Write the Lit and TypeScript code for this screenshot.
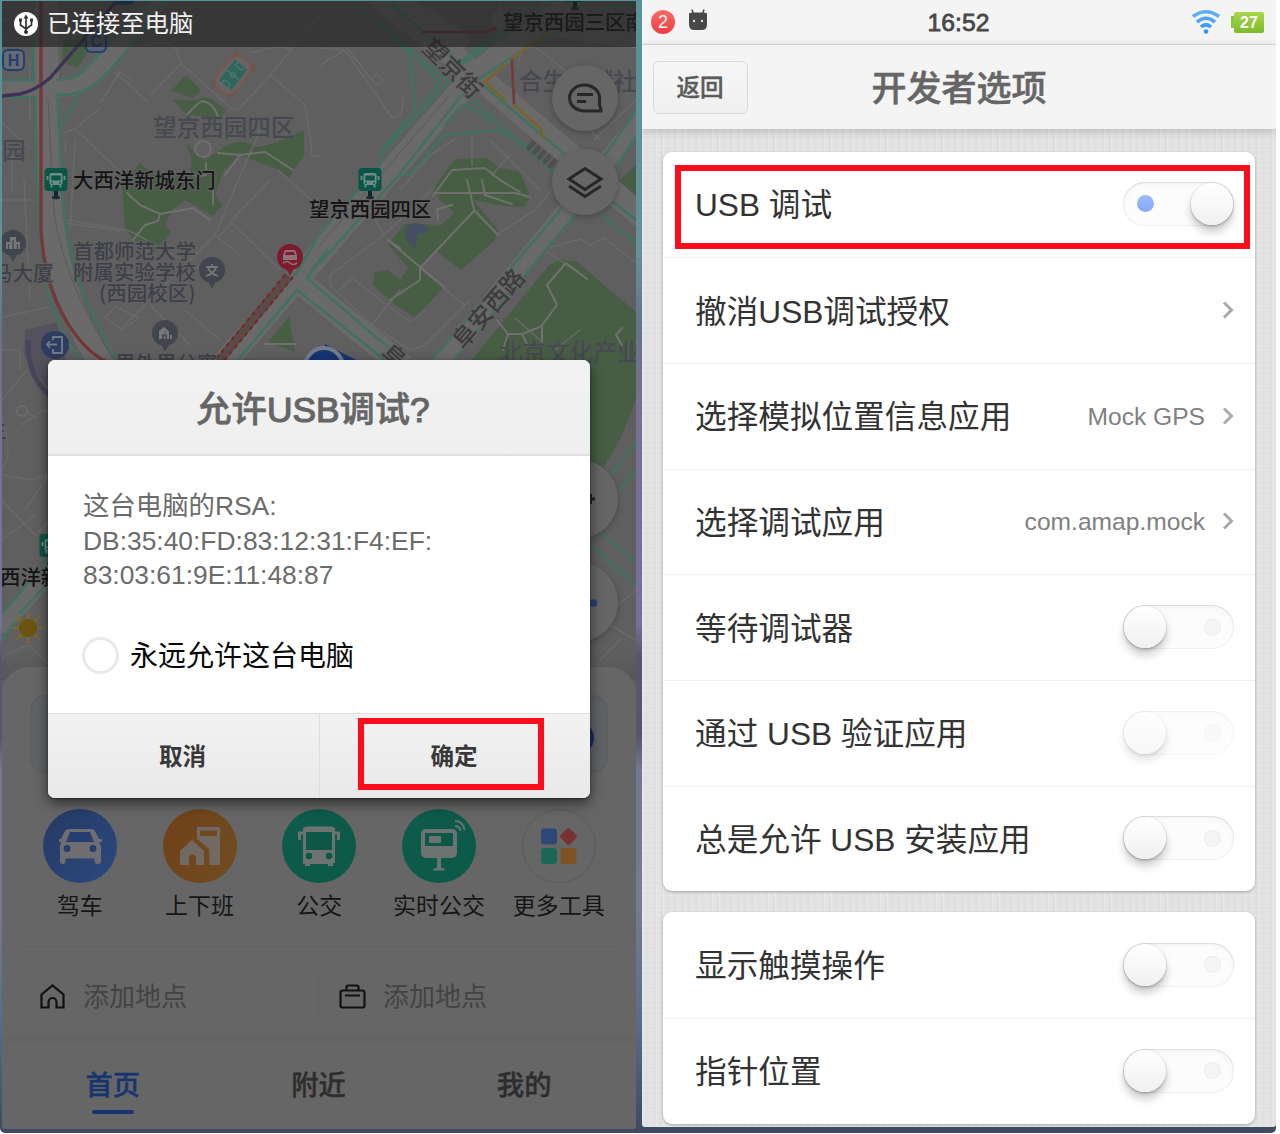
import { LitElement, html, svg, css } from "lit";
import { customElement, property } from "lit/decorators.js";
import { classMap } from "lit/directives/class-map.js";

const ROAD = "#6a6a6a";
const paths = (color: string, width: number, list: string[]) =>
  svg`<g fill="none" stroke=${color} stroke-width=${width} stroke-linejoin="round" stroke-linecap="round">${list.map((d) => svg`<path d=${d}/>`)}</g>`;

/** City map shown behind the dialog. */
@customElement("city-map")
export class CityMap extends LitElement {
  static styles = css`
    :host { display: block; }
    svg { display: block; width: 100%; height: 100%; font-family: "Noto Sans CJK SC", sans-serif; }
    .poi { fill: #3d4048; font-size: 20.5px; font-weight: 500; stroke: #626262; stroke-width: 2px; paint-order: stroke; }
    .area { fill: #474951; font-size: 23.6px; font-weight: 500; }
    .stop { fill: #141414; font-size: 20.4px; font-weight: 500; stroke: #626262; stroke-width: 2px; paint-order: stroke; }
    .street { fill: #3c3c3c; font-size: 24px; font-weight: 500; stroke: #666; stroke-width: 2px; paint-order: stroke; text-anchor: middle; }
    .letter { fill: #21406f; font-size: 16px; font-weight: 700; font-family: "Liberation Sans", sans-serif; text-anchor: middle; }
  `;

  private stop(x: number, y: number) {
    return svg`<g transform="translate(${x} ${y})">
      <path d="M0 8v9" stroke="#0d2a2b" stroke-width="4"/><ellipse cx="0" cy="16.500" rx="4" ry="1.800" fill="#1c2b33"/>
      <rect x="-11.500" y="-13" width="23" height="23" rx="3.500" fill="#0b5547"/>
      <rect x="-6.500" y="-8" width="13" height="12" rx="2" fill="#6f8d86"/>
      <rect x="-4.700" y="-5.500" width="9.400" height="5" fill="#0b5547"/>
      <path d="M-8.500-5v4M8.500-5v4M-4.500 4v2.500M4.500 4v2.500" stroke="#6f8d86" stroke-width="1.800"/>
      <circle cx="-4" cy="2" r=".9" fill="#0b5547"/><circle cx="4" cy="2" r=".9" fill="#0b5547"/></g>`;
  }

  private pin(x: number, y: number, color: string, icon: unknown) {
    return svg`<g transform="translate(${x} ${y})">
      <path d="M-4 11L0 19L4 11z" fill=${color}/><circle r="13" fill=${color}/>${icon}</g>`;
  }

  render() {
    return html`<svg viewBox="2 1 634 690" preserveAspectRatio="xMidYMin slice">
      <defs>
        <linearGradient id="fade" x1="0" x2="0" y1="0" y2="1"><stop offset="0" stop-color="#000" stop-opacity="0"/><stop offset="1" stop-color="#000" stop-opacity=".09"/></linearGradient>
      </defs>
      <rect x="0" y="0" width="640" height="700" fill="#5f5f5f"/>
      <g fill="#475e45">
        <path d="M63 40L90 40L91 47L78 67Q70 67 62 60z"/>
        <path d="M171 91L186 75L201 90L193 98z"/>
        <path d="M173 100L197 100Q207 94 214 101L226 110L220 118L187 115z"/>
        <path d="M225 147Q240 137 256 147Q270 147 304 130V155L289 178L278 170L240 155L224 170L215 195L223 205L213 216L185 200L172 210L165 225L171 232L155 252L133 239L125 229L122 186L140 163L150 172L190 175L192 160L186 143L195 152L205 160z"/>
        <path d="M455 159L487 158L500 168L520 172L530 196L525 207L505 206L473 200L498 230L495 240L461 270L435 250L420 270L443 288L415 318L390 301L373 285L375 272L388 270L400 280L408 268L388 244L405 224L425 224L440 226L454 213L440 200L433 189z"/>
        <path d="M268 342L289 317L295 352z"/>
        <path d="M549 265L562 260L577 262L636 312V400L620 440L590 490L560 400L470 362z"/>
        <path d="M620 180L636 165V210L615 200z"/>
        <path d="M395 1H408L401 9z"/>
      </g>
      <path d="M25 330L58 322L60 345L68 362L82 368L60 400L45 385L24 355z" fill="#55525f"/>
      <path d="M28 340Q27 380 54 398" fill="none" stroke="#48455b" stroke-width="5"/>
      <path d="M405 232Q407 222 418 223L428 228L428 232L417 235L416 248L414 249L407 240z" fill="#454e63"/>
      ${paths("#696969", 1.5, [
        "M2 40H34M115 72L148 102M132 80L120 72L101 102M145 45Q175 38 178 55L182 64L232 109L239 109L270 75L320 16",
        "M182 62L151 95M250 53Q285 43 290 50M270 75L305 105Q311 140 312 156H320M63 133L75 129L129 180M75 129L100 108M65 142L66 152",
        "M2 123L30 148M12 148V190M30 60V120M2 200H36M75 140L70 230M68 220L130 231L220 280M278 170L320 208",
        "M2 317L50 307M24 180L30 300M260 130L215 235L180 270L120 330M220 235L232 223L280 270M215 235L240 255M230 222L270 180",
        "M105 317L116 307L139 318L122 330zM62 180L66 223L120 231M150 305L190 345M185 310L220 340M2 350H20V370",
        "M320 48L345 50L391 116Q403 122 403 98M345 50L320 65M347 48L372 80M383 80L376 73L372 80L378 85z",
        "M472 135V165M455 139L430 155L400 190M490 140L540 190M510 155L492 175M360 195L384 235L435 187M384 235L330 275L330 285L372 325L410 350L425 345L470 300",
        "M340 290L352 278L400 315L410 322L425 310M370 327L400 290M443 288L465 305M498 234L535 210L560 180M520 256L580 239L590 245L604 238L636 263",
        "M545 250L586 278M515 318L540 340M594 140L636 100M580 120L600 140M518 68Q520 40 540 50L600 100",
        "M22 425L43 410L65 420M2 400L27 370M2 422Q14 455 2 470M24 412L37 417M2 500L35 535L60 510M2 475L30 480L48 475M25 510L48 475M2 540L35 515",
        "M2 657L28 645L50 665M555 350L580 330M577 640L636 590M610 625L636 640M600 660L620 640M500 40V1M330 1L300 40M2 20H34",
      ])}
      <circle cx="22" cy="411" r="5" fill="#5f5f5f" stroke="#6a6a6a" stroke-width="2"/>
      ${paths("#70706e", 2, [
        "M187 115Q197 103 202 101Q214 103 218 117M206 163V175Q195 178 190 173M218 153L240 155L265 152L293 170M240 155L225 175M127 193L140 205L160 214L158 221L145 225L133 240M160 214L193 208L210 220M213 181V204",
        "M435 193H515L530 197M467 180L474 210L498 235M482 180L485 195L512 204M433 196L452 170L485 168L500 180L520 192M452 205L437 209L438 220M474 211L420 268V280L390 300M388 240L400 248M388 240L445 288",
        "M566 263L547 285L557 305L542 325V342M566 263L587 279M497 320L508 334H522L542 326M508 334L503 350M522 334L528 346M622 328L616 335L622 345M265 344H295",
      ])}
      <circle cx="203" cy="149" r="8" fill="#616161" stroke="#6f6f6f" stroke-width="2"/>
      <circle cx="206" cy="111" r="7" fill="#475e45"/>
      ${paths(ROAD, 24, [
        "M46 1L48 180Q52 290 105 370", "M352 -25L480 78L640 215", "M590 -20L470 80L225 362", "M302 284L420 380",
      ])}
      ${paths(ROAD, 18, ["M2 88H62Q84 88 100 68L158 1", "M640 120L443 360", "M640 40L500 20", "M2 625L50 572", "M400 1L460 40"])}
      ${paths("#5a5a5a", 1, ["M48 100L53 200Q58 270 108 350", "M449 96L320 245", "M470 40L483 41"])}
      ${paths("#417160", 2.6, [
        "M32 1L34 80H2M2 97H35L37 180Q38 250 50 297T92 370", "M57 80Q78 80 88 66L150 1M57 95Q82 96 100 80T165 1M57 95L62 180Q64 235 77 275T120 365M78 95L62 125",
        "M352 1L449 82L383 151L380 165L320 233L297 272L215 362", "M380 23L410 55L415 110L383 148", "M392 5L457 60L469 60L533 1", "M482 41L457 68L553 1", "M636 3L600 10L535 42L477 80L563 153",
        "M420 63L440 82L422 105M445 125L460 107Q465 103 470 107L490 122", "M320 263L397 177L460 97Q463 93 470 97L520 143L553 172",
        "M397 177L413 172L443 135L498 130L530 148L555 172", "M297 290L238 360M297 290L385 360M327 250L307 278L397 355",
        "M562 208L430 362M575 215L452 362M636 110L605 155M636 137L615 168M613 202L636 220M600 213L636 243",
        "M636 442L610 475M636 470L617 492M600 532L636 562M590 545L636 585M2 613L58 550M20 613L60 570M2 640L15 622",
      ])}
      ${paths("#743837", 3.4, ["M41 1L41 230Q44 280 63 315T107 362"])}
      ${paths("#773838", 2.6, ["M423 32L487 32L495 28", "M512 60L514 105"])}
      ${paths("#7b6328", 2.6, ["M505 64L485 82L505 100", "M514 105L540 128L544 138", "M512 58L550 32"])}
      ${paths("#3f3257", 3.4, ["M2 96L20 94Q35 91 50 78L115 3"])}
      <path d="M289 276L218 362" stroke="#594b4a" stroke-width="9" fill="none"/>
      <path d="M285 275L214 361M293 277L223 362" stroke="#7b251d" stroke-width="2" stroke-dasharray="4 4" fill="none"/>
      <path d="M529 144L554 165" stroke="#505050" stroke-width="11" stroke-dasharray="5 2" fill="none"/>
      <g transform="translate(233 75) rotate(38)"><rect x="-13" y="-21" width="26" height="42" fill="#6b5551"/><rect x="-12" y="-20" width="24" height="40" rx="11" fill="#656565" stroke="#7b574f" stroke-width="2"/><path d="M-8-13H8V13H-8z" fill="#2f6659"/><g fill="none" stroke="#5d7f77" stroke-width=".9"><path d="M-8 0H8M-4-13V-9H4V-13M-4 13V9H4V13"/><circle r="2.500"/></g></g>

      <text class="area" x="153" y="136">望京西园四区</text>
      <text class="area" x="2" y="159">园</text>
      <text class="area" x="519" y="90">合生麒麟社</text>
      <text class="area" x="499" y="361">北京文化产业</text>
      <text class="poi" x="73" y="259">首都师范大学</text>
      <text class="poi" x="73" y="280">附属实验学校</text>
      <text class="poi" x="99" y="301">(西园校区)</text>
      <text class="poi" x="-8" y="281">马大厦</text>
      <text class="poi" x="115" y="371">里外里公寓</text>
      <text class="poi" x="-14" y="438">生</text>
      <text class="street" transform="translate(452 69) rotate(45)" y="8">望京街</text>
      <text class="street" transform="translate(489 309) rotate(-49)" y="8">阜安西路</text>
      <text class="street" transform="translate(397 371) rotate(42)" y="0">阜安</text>

      ${this.stop(56, 181)}${this.stop(370, 181)}${this.stop(575, -8)}${this.stop(51, 547)}
      <text class="stop" x="73" y="188">大西洋新城东门</text>
      <text class="stop" x="309" y="217">望京西园四区</text>
      <text class="stop" x="503" y="30">望京西园三区南</text>
      <text class="stop" x="0" y="585">西洋新</text>

      <rect x="3" y="50" width="21" height="20" rx="5" fill="#676a70" stroke="#21406f" stroke-width="2"/><text class="letter" x="13.500" y="66">H</text>
      <rect x="86" y="32" width="20" height="20" rx="5" fill="#596272" stroke="#21406f" stroke-width="2"/><text class="letter" x="96" y="47">C</text>
      <rect x="114" y="-15" width="20" height="20" rx="5" fill="#21406f"/>

      ${this.pin(13, 243, "#41454e", svg`<path d="M-7 6V-1H-3V-6H3V-1H7V6z" fill="#777"/><path d="M-4.500 1v5M0-3v9M4.500 1v5" stroke="#41454e" stroke-width="1.300"/>`)}
      ${this.pin(212, 270, "#41454e", svg`<path d="M0-6V-4M-6-3H6M-4-2Q-1 4 6 6M4-2Q1 4-6 6" stroke="#777" stroke-width="1.800" fill="none"/>`)}
      ${this.pin(165, 333, "#41454e", svg`<path d="M-6 6V-2L-1-6L4-2V6zM5 2H7V6H5z" fill="#777"/><path d="M-2 6V2H1V6M0-1h1" stroke="#41454e" fill="none" stroke-width="1.500"/>`)}
      ${this.pin(290, 257, "#7c1c2c", svg`<path d="M-5-7H5L7-2V3H-7V-2z" fill="#8f7276"/><path d="M-4-5H4L5-2H-5z" fill="#7c1c2c"/><path d="M-7 6Q-3 3 0 6T7 6" stroke="#8f7276" fill="none" stroke-width="1.600"/>`)}
      <circle cx="55" cy="345" r="14" fill="#2c3d60"/><path d="M53 340V337H62V353H53V349M47 344.500H57M50 341L47 344.500L50 348" fill="none" stroke="#717a89" stroke-width="1.900"/>
      <path d="M325 344L358 361H325z" fill="#153675"/><circle cx="324" cy="367" r="19" fill="#153675" stroke="#777d88" stroke-width="4"/>

      <circle cx="28" cy="628" r="9" fill="#6c5310"/>
      <path d="M28 613.500V618M28 638V642.500M13.500 628H18M38 628H42.500M17.700 617.700L20.900 620.900M35.100 635.100L38.300 638.300M38.300 617.700L35.100 620.900M20.900 635.100L17.700 638.300" fill="none" stroke="#84691b" stroke-width="2.200" stroke-linecap="round"/>

      <g fill="#666" filter="drop-shadow(0 2px 3px rgba(0,0,0,.25))"><circle cx="585" cy="98" r="33"/><circle cx="585" cy="182" r="33"/><circle cx="578" cy="499" r="40"/><circle cx="578" cy="602" r="40"/></g>
      <path d="M601 109.500V111H585A15 13 0 1 1 599.500 97V105z" fill="none" stroke="#272727" stroke-width="3"/>
      <path d="M577 94.500H593M577 101.500H586" stroke="#272727" stroke-width="3"/>
      <path d="M585 168.500L601 179L585 189.500L569 179zM569 186L585 196.500L601 186" fill="none" stroke="#272727" stroke-width="3"/>
      <path d="M578 499H595M590.500 494V504" stroke="#222" stroke-width="3"/><path d="M580 603H597" stroke="#2e4375" stroke-width="7"/>
      <rect x="0" y="650" width="640" height="30" fill="url(#fade)"/>
    </svg>`;
  }
}

/** Round shortcut icons of the home sheet. */
const toolIcons: Record<string, unknown> = {
  car: svg`<path d="M22 22Q23 20 26 20H48Q51 20 52 22L56 30H59V33H56L58 37V52Q58 55 55 55Q51.500 55 51.500 52V49.500H22.500V52Q22.500 55 19.500 55Q17 55 17 52V37L18 33H16V30H18z" fill="#6e6e70"/><path d="M27 23H47L51 33H23z" fill="#263d6d"/><circle cx="24" cy="39.500" r="3.400" fill="#263d6d"/><circle cx="50" cy="39.500" r="3.400" fill="#263d6d"/>`,
  home: svg`<path d="M34 18H57V56H45.500V41L34 30.500z" fill="#716a64"/><path d="M37 21.500H54V27H37z" fill="#70481c"/><path d="M29 27.500L44.500 41V56" fill="none" stroke="#704a1e" stroke-width="3.500"/><path d="M17 42L29 31L41 42V56H33V49A3.500 3.500 0 0 0 26 49V56H17z" fill="#716a64"/>`,
  bus: svg`<path d="M21 20Q21 18 25 17.500H49Q53 18 53 20V54H51V57H46V55H28V57H23V55H21z" fill="#6c7371"/><path d="M24 23H50V41H24z" fill="#0c5746"/><circle cx="27" cy="47" r="3.300" fill="#0c5746"/><circle cx="47" cy="47" r="3.300" fill="#0c5746"/><path d="M17.500 31V24H22M56.500 31V24H52" fill="none" stroke="#6c7371" stroke-width="3"/>`,
  live: svg`<rect x="19" y="20" width="36" height="29" rx="5" fill="#6c7371"/><path d="M23 24H51V37H23z" fill="#0c5746"/><rect x="27" y="27" width="12" height="7" rx="1" fill="#6c7371"/><path d="M37 49V60" stroke="#6c7371" stroke-width="4"/><path d="M31 61.500Q31 58.500 37 58.500Q43 58.500 43 61.500z" fill="#6c7371"/><path d="M53 12Q61 12 62.500 21M53 17Q58 17 58.500 22" fill="none" stroke="#6c7371" stroke-width="2"/>`,
  more: svg`<rect x="19" y="19.500" width="16" height="16" rx="3" fill="#2d4779"/><rect x="19" y="39" width="16" height="16" rx="3" fill="#1d6656"/><rect x="38.500" y="39" width="16" height="16" rx="3" fill="#7d5323"/><rect x="40" y="21" width="13" height="13" rx="2" transform="rotate(45 46.500 27.500)" fill="#78312f"/>`,
};

const TOOLS = [
  ["car", "驾车"], ["home", "上下班"], ["bus", "公交"], ["live", "实时公交"], ["more", "更多工具"],
];

@customElement("map-phone")
export class MapPhone extends LitElement {
  static styles = css`
    :host { display: flex; flex-direction: column; position: relative; overflow: hidden; background: #5f5f5f; border-radius: 0 0 3px 3px;
      font-family: "Liberation Sans", "Noto Sans CJK SC", sans-serif; }
    .map { position: absolute; inset: 0 0 auto 0; height: 690px; }
    .status { position: relative; height: 46px; box-sizing: border-box; flex: none; display: flex; align-items: center; gap: 9px; padding: 0 0 1px 12px; color: #f2f2f2; font-size: 24.400px; line-height: 32px; background: rgba(30, 30, 30, .62); }
    .status svg { width: 24px; height: 24px; }
    .sheet { position: relative; margin-top: auto; flex: none; height: 462px; background: #666; border-radius: 27px 27px 0 0; display: flex; flex-direction: column; }
    .search { box-sizing: border-box; height: 78px; margin: 28px 28px 0; border: 2px solid #5d5f61; border-radius: 15px; background: #606366; display: flex; align-items: center; justify-content: flex-end; padding: 8px 12px 0 0; }
    .go { width: 34px; height: 34px; border-radius: 50%; background: #202d5c; }
    .tools { display: grid; grid-template-columns: repeat(5, 1fr); margin: 36px 17.500px 0 18px; }
    .tool { display: flex; flex-direction: column; align-items: center; color: #161616; font-size: 23px; line-height: 30px; gap: 8px; white-space: nowrap; }
    .disc { width: 74px; height: 74px; border-radius: 50%; }
    .disc svg { display: block; width: 74px; height: 74px; }
    .car { background: linear-gradient(135deg, #263964, #2b4a7e); }
    .home { background: linear-gradient(110deg, #704119, #704c21); }
    .bus, .live { background: linear-gradient(135deg, #0f5b4c, #0c5947); }
    .more { box-sizing: border-box; border: 1.500px solid #5b5b5b; }
    .more svg { margin: -1px; }
    .places { display: grid; grid-template-columns: 1fr 1fr; margin: 25px 20px 0 18px; border-top: 1px solid #606060; height: 95px; align-items: center; padding-top: 4px; box-sizing: border-box; }
    .place { display: flex; align-items: center; height: 36px; gap: 17px; padding-left: 18px; color: #434343; font-size: 26px; }
    .place span { margin-top: -4px; }
    .place + .place { border-left: 1px solid #606060; padding-left: 19px; }
    .place svg { width: 28px; height: 28px; }
    .tabs { flex: 1; display: grid; grid-template-columns: repeat(3, 1fr); padding: 0 9px 0 8px; background: #666; box-shadow: 0 -2px 4px rgba(0, 0, 0, .05); }
    .tab { display: flex; flex-direction: column; align-items: center; padding-top: 25px; gap: 4px; color: #2d2d2d; font-size: 27.300px; font-weight: 500; line-height: 40px; -webkit-text-stroke: .4px currentColor; }
    .tab.active { color: #17356f; }
    .tab.active::after { content: ""; width: 42px; height: 4px; border-radius: 2px; background: #17356f; }
    .dialog { position: absolute; left: 46px; top: 359px; width: 542px; height: 438px; border-radius: 7px; background: #fff; box-shadow: 0 5px 14px rgba(0, 0, 0, .55), 0 1px 2px rgba(0,0,0,.4); display: flex; flex-direction: column; overflow: hidden; }
    .title { height: 96px; box-sizing: border-box; flex: none; display: flex; justify-content: center; align-items: center; padding-right: 12px; padding-bottom: 2px; color: #666; font-size: 35.300px; font-weight: 500; -webkit-text-stroke: .6px #666; background: linear-gradient(#f2f2f2, #efefef); border-bottom: 2px solid #e0e0e0; }
    .title .latin { -webkit-text-stroke: 1.200px #666; }
    .body { flex: 1; padding: 33px 35px 0; color: #6b6b6b; font-size: 26.400px; line-height: 34.500px; }
    .body p { margin: 0; }
    .always { display: flex; align-items: center; gap: 11px; color: #080808; font-size: 28px; margin: 42px 0 0 -1px; line-height: 40px; }
    .always span + span { padding-top: 2px; }
    .radio { width: 37px; height: 37px; box-sizing: border-box; border: 3px solid #e9e9e9; border-radius: 50%; }
    .actions { height: 85px; flex: none; box-sizing: border-box; display: grid; grid-template-columns: 1fr 1fr; border-top: 1px solid #e0e0e0; background: linear-gradient(#f2f2f2, #e9e9e9); }
    .action { display: flex; justify-content: center; align-items: center; color: #383838; font-size: 23.600px; font-weight: 700; padding: 0 2px 3px 0; }
    .action + .action { border-left: 1px solid #dedede; }
    .mark { position: absolute; left: 356px; top: 717px; width: 186px; height: 72px; box-sizing: border-box; border: 6px solid #fd0d1b; }
  `;

  render() {
    return html`
      <city-map class="map"></city-map>
      <div class="status">
        <svg viewBox="0 0 24 24"><circle cx="12" cy="12" r="12" fill="#fff"/><path d="M12 5V19M12 17L6.500 13V8M12 17L17.500 13V8" fill="none" stroke="#333" stroke-width="1.700"/><path d="M9.500 6.500L12 2.500L14.500 6.500z" fill="#333"/><circle cx="12" cy="20" r="2" fill="#333"/><path d="M5 6.500h3v3H5zM16 6.500h3v3h-3z" fill="#333"/></svg>
        <span>已连接至电脑</span>
      </div>
      <div class="sheet">
        <div class="search"><span class="go"></span></div>
        <div class="tools">${TOOLS.map(([icon, label]) => html`<div class="tool"><div class=${classMap({ disc: true, [icon]: true })}><svg viewBox="0 0 74 74">${toolIcons[icon]}</svg></div><span>${label}</span></div>`)}</div>
        <div class="places">
          <div class="place"><svg viewBox="0 0 28 28"><path d="M3.500 12.500L14.500 3.500L25.500 12.500V25.500H18.500V20A4 4 0 0 0 10.500 20V25.500H3.500z" fill="none" stroke="#111" stroke-width="2.200"/></svg><span>添加地点</span></div>
          <div class="place"><svg viewBox="0 0 28 28"><path d="M8.500 8V5Q8.500 3.500 10 3.500H19Q20.500 3.500 20.500 5V8M7 13.500H22" fill="none" stroke="#111" stroke-width="2.200"/><rect x="2.500" y="8.500" width="24" height="17" rx="2" fill="none" stroke="#111" stroke-width="2.200"/></svg><span>添加地点</span></div>
        </div>
        <div class="tabs"><div class="tab active">首页</div><div class="tab">附近</div><div class="tab">我的</div></div>
      </div>
      <div class="dialog">
        <div class="title"><span>允许<span class="latin">USB</span>调试<span class="latin">?</span></span></div>
        <div class="body"><p>这台电脑的RSA:</p><p>DB:35:40:FD:83:12:31:F4:EF:</p><p>83:03:61:9E:11:48:87</p>
          <div class="always"><span class="radio"></span><span>永远允许这台电脑</span></div></div>
        <div class="actions"><div class="action">取消</div><div class="action">确定</div></div>
      </div>
      <div class="mark"></div>`;
  }
}

@customElement("toggle-switch")
export class ToggleSwitch extends LitElement {
  @property({ type: Boolean }) on = false;
  @property({ type: Boolean }) off = false;
  static styles = css`
    :host { display: block; }
    .track { width: 111px; height: 44px; box-sizing: border-box; border-radius: 22px; background: #fcfcfc; box-shadow: inset 0 1px 1px #dcdcdc, inset 0 0 0 1px #f0f0f0, inset 0 3px 6px rgba(0, 0, 0, .03); display: flex; align-items: center; justify-content: space-between; padding: 0 13px 0 1px; }
    .track.on { flex-direction: row-reverse; padding: 0 1px 0 14px; }
    .track.dim { opacity: .5; }
    .knob { width: 42px; height: 42px; border-radius: 50%; background: linear-gradient(#fff, #f0f0f0); box-shadow: 0 0 1px 1px rgba(0, 0, 0, .05), 0 7px 10px rgba(0, 0, 0, .2), 0 2px 3px rgba(0, 0, 0, .16); }
    .dot { width: 17px; height: 17px; border-radius: 50%; background: #f5f5f5; box-shadow: inset 0 0 1px 1px #ededed; }
    .on .dot { background: linear-gradient(#9dbbfb, #84a9f9); box-shadow: none; }
  `;
  render() {
    return html`<div class=${classMap({ track: true, on: this.on, dim: this.off })}><span class="knob"></span><span class="dot"></span></div>`;
  }
}

interface Row { label: string; value?: string; link?: boolean; on?: boolean; off?: boolean; }
const GROUPS: Row[][] = [
  [
    { label: "USB 调试", on: true },
    { label: "撤消USB调试授权", link: true },
    { label: "选择模拟位置信息应用", link: true, value: "Mock GPS" },
    { label: "选择调试应用", link: true, value: "com.amap.mock" },
    { label: "等待调试器" },
    { label: "通过 USB 验证应用", off: true },
    { label: "总是允许 USB 安装应用" },
  ],
  [{ label: "显示触摸操作" }, { label: "指针位置" }],
];

@customElement("settings-phone")
export class SettingsPhone extends LitElement {
  static styles = css`
    :host { display: flex; flex-direction: column; position: relative; overflow: hidden; border-radius: 0 0 3px 3px;
      font-family: "Liberation Sans", "Noto Sans CJK SC", sans-serif;
      background: repeating-linear-gradient(90deg, rgba(255,255,255,.16) 0 1px, transparent 1px 4px, rgba(0,0,0,.012) 4px 7px), repeating-linear-gradient(rgba(255,255,255,.14) 0 1px, transparent 1px 5px), #e2e2e2; }
    .status { height: 45px; flex: none; box-sizing: border-box; display: grid; grid-template-columns: 1fr auto 1fr; align-items: center; background: #f4f4f4; border-bottom: 1px solid #dcdcdc; padding: 0 12px 0 9px; }
    .left, .right { display: flex; align-items: center; }
    .left { gap: 13px; }
    .right { justify-content: flex-end; gap: 10px; }
    .badge { width: 24px; height: 24px; border-radius: 50%; background: linear-gradient(#fb6a66, #ee3c40); color: #fff; font-size: 18px; line-height: 24px; text-align: center; }
    .droid { width: 20px; height: 22px; margin-top: -4px; }
    .time { font-size: 24.700px; color: #484848; -webkit-text-stroke: .8px #484848; padding: 2px 0 0 2px; }
    .wifi { width: 30px; height: 26px; }
    .battery { display: flex; align-items: center; }
    .battery::before { content: ""; width: 3px; height: 12px; background: #8cc63c; }
    .level { width: 30px; height: 21px; border-radius: 2px; background: linear-gradient(#a9d74d, #7cba2a); color: #fff; font-weight: 700; font-size: 16px; line-height: 21px; text-align: center; }
    .bar { height: 84px; flex: none; display: grid; grid-template-columns: 95px 1fr 95px; align-items: center; padding: 0 11px; background: #f4f4f4; box-shadow: 0 2px 9px rgba(0, 0, 0, .2); position: relative; }
    .back { height: 53px; box-sizing: border-box; border: 1px solid #dadada; border-radius: 6px; background: linear-gradient(#f6f6f6, #f0f0f0); color: #5b5b5b; font-size: 23.600px; font-weight: 500; -webkit-text-stroke: .4px #5b5b5b; display: flex; align-items: center; justify-content: center; padding: 0 1px 2px 0; }
    .title { text-align: center; color: #666; font-size: 35px; font-weight: 500; -webkit-text-stroke: .5px #666; padding-bottom: 4px; }
    .list { display: flex; flex-direction: column; gap: 21px; padding: 22.500px 21px 0; }
    .card { background: #fff; border-radius: 9px; box-shadow: 0 1px 3px rgba(0, 0, 0, .28); }
    .row { height: 105.700px; box-sizing: border-box; display: flex; align-items: center; padding: 0 21px 1px 32px; color: #333; font-size: 31.650px; }
    .row + .row { border-top: 1.500px solid #f0f0f0; }
    .label { flex: 1; white-space: nowrap; padding-bottom: 3px; }
    .value { color: #808080; font-size: 24.600px; margin-right: 17px; padding-top: 2px; }
    .chev { width: 12px; height: 20px; margin-right: 0; }
    .mark { position: absolute; left: 33px; top: 165px; width: 575px; height: 84px; box-sizing: border-box; border: 6px solid #fd0d1b; }
  `;

  private row(r: Row) {
    return html`<div class="row"><span class="label">${r.label}</span>
      ${r.link
        ? html`${r.value ? html`<span class="value">${r.value}</span>` : null}<svg class="chev" viewBox="0 0 12 20"><path d="M2 2.500L9.500 10L2 17.500" fill="none" stroke="#aaa" stroke-width="3"/></svg>`
        : html`<toggle-switch ?on=${!!r.on} ?off=${!!r.off}></toggle-switch>`}
    </div>`;
  }

  render() {
    return html`
      <div class="status">
        <div class="left"><span class="badge">2</span>
          <svg class="droid" viewBox="0 0 20 22"><path d="M5.500 5L4 .5M14.500 5L16 .5" stroke="#484848" stroke-width="1.500"/><path d="M1 5Q1 3.500 4 3.500H16Q19 3.500 19 5V15Q19 21 14 21H6Q1 21 1 15z" fill="#484848"/><circle cx="6" cy="12" r="1.200" fill="#ddd"/><circle cx="14" cy="12" r="1.200" fill="#ddd"/></svg></div>
        <span class="time">16:52</span>
        <div class="right">
          <svg class="wifi" viewBox="0 0 30 26"><g fill="none" stroke-width="3.600"><path d="M2 7.500Q15-2 28 7.500" stroke="#5aaefa"/><path d="M6 13Q15 5.500 24 13" stroke="#4fa4f9"/><path d="M10 18Q15 13.500 20 18" stroke="#439af8"/></g><circle cx="15" cy="22.500" r="2.300" fill="#3890f7"/></svg>
          <div class="battery"><span class="level">27</span></div>
        </div>
      </div>
      <div class="bar"><div class="back">返回</div><div class="title">开发者选项</div></div>
      <div class="list">${GROUPS.map((g) => html`<div class="card">${g.map((r) => this.row(r))}</div>`)}</div>
      <div class="mark"></div>`;
  }
}

@customElement("app-root")
export class AppRoot extends LitElement {
  static styles = css`
    :host { display: block; width: 1280px; height: 1134px; background: #fff; overflow: hidden; }
    .desk { display: flex; gap: 6px; width: 1276px; height: 1133px; box-sizing: border-box; padding-left: 2px; border-radius: 0 0 5px 5px;
      background: linear-gradient(#58909a 0, #659096 22%, #67718e 29%, #777194 36%, #78709a 55%, #55566c 58%, #555768 65%, #747894 68%, #757b92 80%, #5e6b89 90%, #3f4962 100%); }
    map-phone { width: 634px; height: 1128px; margin-top: 1px; }
    settings-phone { width: 634px; height: 1127px; }
  `;
  render() {
    return html`<div class="desk"><map-phone></map-phone><settings-phone></settings-phone></div>`;
  }
}
